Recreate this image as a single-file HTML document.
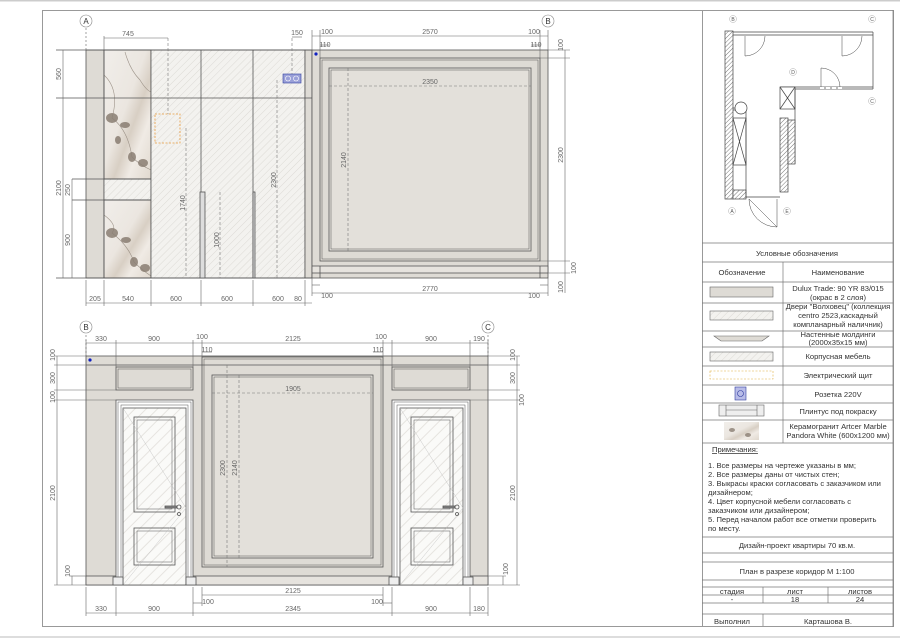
<!DOCTYPE html>
<html><head><meta charset="utf-8"><style>
html,body{margin:0;padding:0;background:#fff;}
svg{display:block;font-family:"Liberation Sans",sans-serif;}
.d{font-size:7px;fill:#666;}
.t{font-size:7.6px;fill:#333;}
</style></head><body>
<svg width="900" height="638" viewBox="0 0 900 638" xmlns="http://www.w3.org/2000/svg">
<defs>
<pattern id="h" width="5" height="5" patternUnits="userSpaceOnUse" patternTransform="rotate(45)">
<rect width="5" height="5" fill="#f3f2ef"/><line x1="0" y1="0" x2="0" y2="5" stroke="#dcdad5" stroke-width="1"/></pattern>
<pattern id="dh" width="8" height="8" patternUnits="userSpaceOnUse" patternTransform="rotate(45)">
<rect width="8" height="8" fill="#fafaf8"/><line x1="0" y1="0" x2="0" y2="8" stroke="#e6e4e0" stroke-width="2"/></pattern>
<pattern id="wh" width="3" height="3" patternUnits="userSpaceOnUse" patternTransform="rotate(45)">
<rect width="3" height="3" fill="#fff"/><line x1="0" y1="0" x2="0" y2="3" stroke="#555" stroke-width="0.8"/></pattern>
<linearGradient id="m" x1="0" y1="0" x2="1" y2="1">
<stop offset="0" stop-color="#f1eeea"/><stop offset="0.45" stop-color="#ebe6e0"/><stop offset="0.6" stop-color="#d8cfc4"/><stop offset="0.75" stop-color="#f0ebe5"/><stop offset="1" stop-color="#e0d8ce"/></linearGradient>
</defs>
<rect x="0" y="0" width="900" height="1.5" fill="#ccc"/>
<rect x="0" y="636" width="900" height="2" fill="#ddd"/>
<rect x="42.5" y="10.5" width="851" height="616" fill="none" stroke="#999"/>
<line x1="702.5" y1="10" x2="702.5" y2="627" stroke="#999"/>

<!-- ===== Elevation A ===== -->
<g stroke="#555" stroke-width="0.8">
<rect x="86" y="50" width="18" height="228" fill="#dedbd5"/>
<rect x="104" y="50" width="47" height="129" fill="url(#m)"/>
<rect x="104" y="179" width="47" height="21" fill="url(#h)"/>
<rect x="104" y="200" width="47" height="78" fill="url(#m)"/>
</g>
<g fill="#7d7064" opacity="0.75">
<ellipse cx="112" cy="118" rx="6" ry="5"/><ellipse cx="125" cy="125" rx="5" ry="3"/><ellipse cx="132" cy="157" rx="4" ry="5"/><ellipse cx="143" cy="163" rx="5" ry="4"/><ellipse cx="118" cy="140" rx="3" ry="4"/>
<ellipse cx="112" cy="233" rx="6" ry="5"/><ellipse cx="126" cy="240" rx="5" ry="3"/><ellipse cx="134" cy="262" rx="4" ry="5"/><ellipse cx="145" cy="268" rx="5" ry="4"/>
</g>
<g stroke="#8a7f74" stroke-width="0.6" fill="none" opacity="0.8">
<path d="M104,75 Q120,90 112,118 Q128,130 132,157 Q140,165 151,170"/>
<path d="M125,52 Q130,70 140,80 Q146,90 151,92"/>
<path d="M104,215 Q118,225 112,233 Q128,245 134,262 Q142,270 151,276"/>
</g>
<g stroke="#555" stroke-width="0.8">
<rect x="104" y="50" width="47" height="129" fill="none"/>
<rect x="104" y="200" width="47" height="78" fill="none"/>
<rect x="151" y="50" width="154" height="228" fill="url(#h)"/>
<rect x="305" y="50" width="7" height="228" fill="#dedbd5"/>
<line x1="56" y1="98" x2="312" y2="98"/>
<line x1="56" y1="50" x2="312" y2="50"/>
<line x1="56" y1="278" x2="312" y2="278"/>
<line x1="201" y1="50" x2="201" y2="278"/>
<line x1="253" y1="50" x2="253" y2="278"/>
<rect x="200" y="192" width="5" height="86" fill="#ddd"/>
<rect x="253" y="192" width="2" height="86" fill="#ddd"/>
<line x1="72" y1="179" x2="151" y2="179"/><line x1="72" y1="200" x2="151" y2="200"/>
</g>
<rect x="155" y="114" width="25" height="29" fill="none" stroke="#e89a3c" stroke-width="0.8" stroke-dasharray="2,1.5"/>
<rect x="283" y="74" width="18" height="9" fill="#9aa0d8" stroke="#3340a0" stroke-width="0.6"/>
<circle cx="288" cy="78.5" r="2.5" fill="none" stroke="#fff" stroke-width="0.6"/><circle cx="296" cy="78.5" r="2.5" fill="none" stroke="#fff" stroke-width="0.6"/>
<g stroke="#777" stroke-width="0.6" stroke-dasharray="3,2" fill="none">
<line x1="168" y1="38" x2="168" y2="114"/><line x1="186" y1="128" x2="186" y2="278"/>
<line x1="220" y1="192" x2="220" y2="278"/><line x1="277" y1="80" x2="277" y2="278"/>
<line x1="292" y1="38" x2="292" y2="74"/>
</g>
<g stroke="#666" stroke-width="0.6" fill="none">
<line x1="63" y1="50" x2="63" y2="278"/><line x1="72" y1="179" x2="72" y2="278"/>
<line x1="104" y1="38" x2="168" y2="38"/><line x1="104" y1="36" x2="104" y2="50"/>
<line x1="86" y1="303" x2="312" y2="303"/>
<line x1="86" y1="280" x2="86" y2="306"/><line x1="104" y1="280" x2="104" y2="306"/><line x1="151" y1="280" x2="151" y2="306"/><line x1="201" y1="280" x2="201" y2="306"/><line x1="253" y1="280" x2="253" y2="306"/><line x1="305" y1="280" x2="305" y2="306"/>
<line x1="292" y1="37" x2="302" y2="37"/>
<line x1="86" y1="28" x2="86" y2="50" stroke-dasharray="2,2"/>
</g>
<circle cx="86" cy="21" r="6" fill="#fff" stroke="#888" stroke-width="0.6"/><text x="86" y="24" text-anchor="middle" font-size="8" fill="#333">A</text>
<g class="d">
<text x="128" y="36" text-anchor="middle">745</text><text x="297" y="35" text-anchor="middle">150</text>
<text x="95" y="301" text-anchor="middle">205</text><text x="128" y="301" text-anchor="middle">540</text><text x="176" y="301" text-anchor="middle">600</text><text x="227" y="301" text-anchor="middle">600</text><text x="278" y="301" text-anchor="middle">600</text><text x="298" y="301" text-anchor="middle">80</text>
<text transform="translate(61,74) rotate(-90)" text-anchor="middle">560</text>
<text transform="translate(61,188) rotate(-90)" text-anchor="middle">2100</text>
<text transform="translate(70,190) rotate(-90)" text-anchor="middle">250</text>
<text transform="translate(70,240) rotate(-90)" text-anchor="middle">900</text>
<text transform="translate(185,203) rotate(-90)" text-anchor="middle">1740</text>
<text transform="translate(219,240) rotate(-90)" text-anchor="middle">1000</text>
<text transform="translate(276,180) rotate(-90)" text-anchor="middle">2300</text>
</g>

<!-- ===== Elevation B ===== -->
<g stroke="#555" stroke-width="0.8">
<rect x="312" y="50" width="236" height="228" fill="#dedbd5"/>
<rect x="320" y="58" width="220" height="203" fill="none"/>
<rect x="322" y="60" width="216" height="199" fill="none" stroke-width="0.5"/>
<rect x="329" y="68" width="202" height="183" fill="#e3e0da"/>
<rect x="331" y="70" width="198" height="179" fill="none" stroke-width="0.5"/>
<rect x="312" y="266" width="236" height="7" fill="#e6e3de"/>
<line x1="320" y1="266" x2="320" y2="278"/><line x1="540" y1="266" x2="540" y2="278"/>
</g>
<circle cx="316" cy="54" r="1.6" fill="#1020c0"/>
<g stroke="#777" stroke-width="0.6" stroke-dasharray="3,2" fill="none">
<line x1="329" y1="86" x2="531" y2="86"/><line x1="348" y1="68" x2="348" y2="251"/>
</g>
<g stroke="#666" stroke-width="0.6" fill="none">
<line x1="312" y1="36" x2="548" y2="36"/><line x1="320" y1="45" x2="329" y2="45"/><line x1="531" y1="45" x2="540" y2="45"/>
<line x1="312" y1="30" x2="312" y2="50"/><line x1="320" y1="30" x2="320" y2="58"/><line x1="540" y1="30" x2="540" y2="58"/><line x1="548" y1="30" x2="548" y2="50"/>
<line x1="565" y1="50" x2="565" y2="293"/><line x1="548" y1="50" x2="570" y2="50"/><line x1="540" y1="58" x2="570" y2="58"/><line x1="540" y1="261" x2="570" y2="261"/><line x1="548" y1="273" x2="570" y2="273"/>
<line x1="312" y1="293" x2="548" y2="293"/><line x1="312" y1="285" x2="320" y2="285"/><line x1="540" y1="285" x2="548" y2="285"/>
<line x1="312" y1="278" x2="312" y2="296"/><line x1="548" y1="278" x2="548" y2="296"/>
</g>
<circle cx="548" cy="21" r="6" fill="#fff" stroke="#888" stroke-width="0.6"/><text x="548" y="24" text-anchor="middle" font-size="8" fill="#333">B</text>
<g class="d">
<text x="327" y="34" text-anchor="middle">100</text><text x="430" y="34" text-anchor="middle">2570</text><text x="534" y="34" text-anchor="middle">100</text>
<text x="325" y="47" text-anchor="middle">110</text><text x="536" y="47" text-anchor="middle">110</text>
<text x="430" y="84" text-anchor="middle">2350</text>
<text x="430" y="291" text-anchor="middle">2770</text><text x="327" y="298" text-anchor="middle">100</text><text x="534" y="298" text-anchor="middle">100</text>
<text transform="translate(346,160) rotate(-90)" text-anchor="middle">2140</text>
<text transform="translate(563,155) rotate(-90)" text-anchor="middle">2300</text>
<text transform="translate(563,45) rotate(-90)" text-anchor="middle">100</text>
<text transform="translate(576,268) rotate(-90)" text-anchor="middle">100</text>
<text transform="translate(563,287) rotate(-90)" text-anchor="middle">100</text>
</g>

<!-- ===== Bottom Elevation ===== -->
<g stroke="#555" stroke-width="0.8">
<rect x="86" y="356" width="402" height="229" fill="#dedbd5"/>
<line x1="86" y1="365" x2="488" y2="365"/>
<rect x="116" y="367" width="77" height="23" fill="#dedbd5"/><rect x="118" y="369" width="73" height="19" fill="none" stroke-width="0.5"/>
<rect x="392" y="367" width="78" height="23" fill="#dedbd5"/><rect x="394" y="369" width="74" height="19" fill="none" stroke-width="0.5"/>
<rect x="202" y="357" width="181" height="210" fill="none"/>
<rect x="204" y="359" width="177" height="206" fill="none" stroke-width="0.5"/>
<rect x="212" y="375" width="161" height="183" fill="#e3e0da"/>
<rect x="214" y="377" width="157" height="179" fill="none" stroke-width="0.5"/>
<rect x="86" y="576" width="402" height="9" fill="#e6e3de"/>
<!-- left door -->
<rect x="116" y="400" width="77" height="185" fill="#fff"/>
<rect x="118" y="402" width="73" height="183" fill="none" stroke-width="0.5"/>
<rect x="121" y="405" width="67" height="180" fill="none" stroke-width="0.5"/>
<rect x="123" y="408" width="63" height="177" fill="url(#dh)"/>
<rect x="134" y="417" width="41" height="95" fill="url(#dh)"/><rect x="137" y="420" width="35" height="89" fill="none" stroke-width="0.5"/>
<rect x="134" y="528" width="41" height="37" fill="url(#dh)"/><rect x="137" y="531" width="35" height="31" fill="none" stroke-width="0.5"/>
<line x1="123" y1="408" x2="186" y2="508" stroke="#bbb" stroke-width="0.4"/><line x1="123" y1="585" x2="186" y2="508" stroke="#bbb" stroke-width="0.4"/>
<rect x="165" y="506" width="12" height="2" fill="#888"/><circle cx="179" cy="507" r="2" fill="none"/><circle cx="179" cy="514" r="1.5" fill="none"/>
<rect x="113" y="577" width="10" height="8" fill="#eee"/><rect x="186" y="577" width="10" height="8" fill="#eee"/>
<!-- right door -->
<rect x="392" y="400" width="78" height="185" fill="#fff"/>
<rect x="394" y="402" width="74" height="183" fill="none" stroke-width="0.5"/>
<rect x="397" y="405" width="68" height="180" fill="none" stroke-width="0.5"/>
<rect x="400" y="408" width="63" height="177" fill="url(#dh)"/>
<rect x="411" y="417" width="42" height="95" fill="url(#dh)"/><rect x="414" y="420" width="36" height="89" fill="none" stroke-width="0.5"/>
<rect x="411" y="528" width="42" height="37" fill="url(#dh)"/><rect x="414" y="531" width="36" height="31" fill="none" stroke-width="0.5"/>
<line x1="400" y1="408" x2="463" y2="508" stroke="#bbb" stroke-width="0.4"/><line x1="400" y1="585" x2="463" y2="508" stroke="#bbb" stroke-width="0.4"/>
<rect x="443" y="506" width="12" height="2" fill="#888"/><circle cx="457" cy="507" r="2" fill="none"/><circle cx="457" cy="514" r="1.5" fill="none"/>
<rect x="389" y="577" width="10" height="8" fill="#eee"/><rect x="463" y="577" width="10" height="8" fill="#eee"/>
</g>
<circle cx="90" cy="360" r="1.6" fill="#1020c0"/>
<g stroke="#777" stroke-width="0.6" stroke-dasharray="3,2" fill="none">
<line x1="212" y1="393" x2="373" y2="393"/><line x1="227" y1="365" x2="227" y2="567"/><line x1="239" y1="375" x2="239" y2="558"/>
</g>
<g stroke="#666" stroke-width="0.6" fill="none">
<line x1="86" y1="343" x2="488" y2="343"/>
<line x1="86" y1="340" x2="86" y2="356"/><line x1="116" y1="340" x2="116" y2="367"/><line x1="193" y1="340" x2="193" y2="367"/><line x1="202" y1="340" x2="202" y2="357"/><line x1="383" y1="340" x2="383" y2="357"/><line x1="392" y1="340" x2="392" y2="367"/><line x1="470" y1="340" x2="470" y2="367"/><line x1="488" y1="340" x2="488" y2="356"/>
<line x1="202" y1="352" x2="212" y2="352"/><line x1="373" y1="352" x2="383" y2="352"/>
<line x1="57" y1="356" x2="57" y2="585"/><line x1="72" y1="576" x2="72" y2="585"/>
<line x1="54" y1="356" x2="86" y2="356"/><line x1="54" y1="365" x2="86" y2="365"/><line x1="54" y1="390" x2="116" y2="390"/><line x1="54" y1="400" x2="116" y2="400"/><line x1="54" y1="585" x2="86" y2="585"/><line x1="70" y1="576" x2="86" y2="576"/>
<line x1="517" y1="356" x2="517" y2="585"/><line x1="503" y1="576" x2="503" y2="585"/>
<line x1="488" y1="356" x2="520" y2="356"/><line x1="488" y1="365" x2="520" y2="365"/><line x1="470" y1="390" x2="520" y2="390"/><line x1="470" y1="400" x2="520" y2="400"/><line x1="488" y1="585" x2="520" y2="585"/><line x1="488" y1="576" x2="506" y2="576"/>
<line x1="202" y1="595" x2="383" y2="595"/><line x1="193" y1="603" x2="202" y2="603"/><line x1="383" y1="603" x2="392" y2="603"/>
<line x1="86" y1="613" x2="488" y2="613"/>
<line x1="86" y1="587" x2="86" y2="616"/><line x1="116" y1="587" x2="116" y2="616"/><line x1="193" y1="587" x2="193" y2="616"/><line x1="202" y1="587" x2="202" y2="606"/><line x1="383" y1="587" x2="383" y2="606"/><line x1="392" y1="587" x2="392" y2="616"/><line x1="470" y1="587" x2="470" y2="616"/><line x1="488" y1="587" x2="488" y2="616"/>
<line x1="86" y1="335" x2="86" y2="356" stroke-dasharray="2,2"/><line x1="488" y1="335" x2="488" y2="356" stroke-dasharray="2,2"/>
</g>
<circle cx="86" cy="327" r="6" fill="#fff" stroke="#888" stroke-width="0.6"/><text x="86" y="330" text-anchor="middle" font-size="8" fill="#333">B</text>
<circle cx="488" cy="327" r="6" fill="#fff" stroke="#888" stroke-width="0.6"/><text x="488" y="330" text-anchor="middle" font-size="8" fill="#333">C</text>
<g class="d">
<text x="101" y="341" text-anchor="middle">330</text><text x="154" y="341" text-anchor="middle">900</text><text x="202" y="339" text-anchor="middle">100</text><text x="293" y="341" text-anchor="middle">2125</text><text x="381" y="339" text-anchor="middle">100</text><text x="431" y="341" text-anchor="middle">900</text><text x="479" y="341" text-anchor="middle">190</text>
<text x="207" y="352" text-anchor="middle">110</text><text x="378" y="352" text-anchor="middle">110</text>
<text x="293" y="391" text-anchor="middle">1905</text>
<text x="293" y="593" text-anchor="middle">2125</text><text x="208" y="604" text-anchor="middle">100</text><text x="377" y="604" text-anchor="middle">100</text>
<text x="101" y="611" text-anchor="middle">330</text><text x="154" y="611" text-anchor="middle">900</text><text x="293" y="611" text-anchor="middle">2345</text><text x="431" y="611" text-anchor="middle">900</text><text x="479" y="611" text-anchor="middle">180</text>
<text transform="translate(55,355) rotate(-90)" text-anchor="middle">100</text>
<text transform="translate(55,378) rotate(-90)" text-anchor="middle">300</text>
<text transform="translate(55,397) rotate(-90)" text-anchor="middle">100</text>
<text transform="translate(55,493) rotate(-90)" text-anchor="middle">2100</text>
<text transform="translate(70,571) rotate(-90)" text-anchor="middle">100</text>
<text transform="translate(515,355) rotate(-90)" text-anchor="middle">100</text>
<text transform="translate(515,378) rotate(-90)" text-anchor="middle">300</text>
<text transform="translate(524,400) rotate(-90)" text-anchor="middle">100</text>
<text transform="translate(515,493) rotate(-90)" text-anchor="middle">2100</text>
<text transform="translate(508,569) rotate(-90)" text-anchor="middle">100</text>
<text transform="translate(225,468) rotate(-90)" text-anchor="middle">2300</text>
<text transform="translate(237,468) rotate(-90)" text-anchor="middle">2140</text>
</g>

<!-- ===== Plan ===== -->
<g stroke="#444" stroke-width="0.7">
<rect x="725" y="31" width="8" height="168" fill="url(#wh)"/>
<line x1="733" y1="32" x2="873" y2="32"/><line x1="733" y1="35" x2="873" y2="35"/>
<line x1="873" y1="32" x2="873" y2="89"/>
<line x1="780" y1="87" x2="873" y2="87"/><line x1="780" y1="89" x2="873" y2="89"/>
<rect x="780" y="87" width="15" height="22" fill="#fff"/><line x1="780" y1="87" x2="795" y2="109"/><line x1="795" y1="87" x2="780" y2="109"/>
<line x1="795" y1="89" x2="795" y2="164"/>
<rect x="780" y="118" width="8" height="74" fill="url(#wh)"/>
<rect x="788" y="120" width="7" height="44" fill="url(#wh)"/>
<rect x="733" y="118" width="13" height="47" fill="#fff"/><line x1="733" y1="118" x2="746" y2="165"/><line x1="746" y1="118" x2="733" y2="165"/>
<line x1="733" y1="108" x2="746" y2="108"/><line x1="733" y1="110" x2="746" y2="110"/>
<rect x="733" y="190" width="13" height="9" fill="url(#wh)"/>
<line x1="746" y1="110" x2="746" y2="198"/>
<line x1="746" y1="197" x2="780" y2="197"/>
<circle cx="741" cy="108" r="6" fill="#fff"/>
<path d="M745,36 L745,56 A20,20 0 0 0 765,36" fill="none" stroke-width="0.5"/>
<path d="M842,36 L842,56 A20,20 0 0 0 862,36" fill="none" stroke-width="0.5"/>
<path d="M821,87 L821,68 A19,19 0 0 1 840,87" fill="none" stroke-width="0.5"/>
<path d="M749,199 L777,227 L777,199" fill="none" stroke-width="0.5"/>
<path d="M749,199 A28,28 0 0 0 777,227" fill="none" stroke-width="0.5"/>
</g>
<g stroke="#fff" stroke-width="2" stroke-dasharray="4,2"><line x1="746" y1="33.5" x2="770" y2="33.5"/><line x1="842" y1="33.5" x2="866" y2="33.5"/><line x1="820" y1="88" x2="843" y2="88"/></g>
<g font-size="5" fill="#555" text-anchor="middle">
<circle cx="733" cy="19" r="3.5" fill="#fff" stroke="#999" stroke-width="0.4"/><text x="733" y="21">B</text>
<circle cx="872" cy="19" r="3.5" fill="#fff" stroke="#999" stroke-width="0.4"/><text x="872" y="21">C</text>
<circle cx="793" cy="72" r="3.5" fill="#fff" stroke="#999" stroke-width="0.4"/><text x="793" y="74">D</text>
<circle cx="872" cy="101" r="3.5" fill="#fff" stroke="#999" stroke-width="0.4"/><text x="872" y="103">C</text>
<circle cx="732" cy="211" r="3.5" fill="#fff" stroke="#999" stroke-width="0.4"/><text x="732" y="213">A</text>
<circle cx="787" cy="211" r="3.5" fill="#fff" stroke="#999" stroke-width="0.4"/><text x="787" y="213">E</text>
</g>

<!-- ===== Title block table ===== -->
<g stroke="#777" stroke-width="0.7" fill="none">
<line x1="702" y1="243" x2="893" y2="243"/><line x1="702" y1="262" x2="893" y2="262"/><line x1="702" y1="282" x2="893" y2="282"/>
<line x1="702" y1="303" x2="893" y2="303"/><line x1="702" y1="331" x2="893" y2="331"/><line x1="702" y1="347" x2="893" y2="347"/>
<line x1="702" y1="366" x2="893" y2="366"/><line x1="702" y1="385" x2="893" y2="385"/><line x1="702" y1="403" x2="893" y2="403"/>
<line x1="702" y1="420" x2="893" y2="420"/><line x1="702" y1="443" x2="893" y2="443"/>
<line x1="702" y1="537" x2="893" y2="537"/><line x1="702" y1="553" x2="893" y2="553"/><line x1="702" y1="562" x2="893" y2="562"/>
<line x1="702" y1="580" x2="893" y2="580"/><line x1="702" y1="587" x2="893" y2="587"/><line x1="702" y1="595" x2="893" y2="595"/><line x1="702" y1="603" x2="893" y2="603"/><line x1="702" y1="614" x2="893" y2="614"/>
<line x1="783" y1="262" x2="783" y2="443"/>
<line x1="763" y1="587" x2="763" y2="603"/><line x1="828" y1="587" x2="828" y2="603"/><line x1="763" y1="614" x2="763" y2="626"/>
<line x1="893" y1="10" x2="893" y2="627"/>
</g>
<g stroke="#666" stroke-width="0.6">
<rect x="710" y="287" width="63" height="10" fill="#dedbd5"/>
<rect x="710" y="311" width="63" height="9" fill="url(#h)"/>
<path d="M714,336 L769,336 L762,341 L721,341 Z" fill="#dedbd5"/>
<rect x="710" y="352" width="63" height="9" fill="url(#h)"/>
<rect x="710" y="371" width="63" height="8" fill="#fff" stroke="#e0b040" stroke-dasharray="2,1.5"/>
<rect x="735" y="387" width="11" height="13" fill="#b8bce8" stroke="#3340a0"/>
<rect x="719" y="405" width="45" height="11" fill="#eee"/><line x1="726" y1="405" x2="726" y2="416"/><line x1="757" y1="405" x2="757" y2="416"/><line x1="726" y1="410" x2="757" y2="410"/>
<rect x="724" y="422" width="35" height="18" fill="url(#m)" stroke="none"/>
</g>
<g fill="#7d7064" opacity="0.7"><ellipse cx="732" cy="430" rx="3" ry="2"/><ellipse cx="748" cy="435" rx="3" ry="2"/></g>
<circle cx="740.5" cy="393.5" r="3" fill="none" stroke="#3340a0" stroke-width="0.6"/>
<g class="t" text-anchor="middle">
<text x="797" y="256">Условные обозначения</text>
<text x="742" y="275">Обозначение</text><text x="838" y="275">Наименование</text>
<text x="838" y="291">Dulux Trade: 90 YR 83/015</text><text x="838" y="300">(окрас в 2 слоя)</text>
<text x="838" y="309">Двери "Волховец" (коллекция</text><text x="838" y="318">centro 2523,каскадный</text><text x="838" y="327">компланарный наличник)</text>
<text x="838" y="337">Настенные молдинги</text><text x="838" y="345">(2000x35x15 мм)</text>
<text x="838" y="359">Корпусная мебель</text>
<text x="838" y="378">Электрический щит</text>
<text x="838" y="397">Розетка 220V</text>
<text x="838" y="414">Плинтус под покраску</text>
<text x="838" y="429">Керамогранит Artcer Marble</text><text x="838" y="438">Pandora White (600x1200 мм)</text>
</g>
<g class="t">
<text x="712" y="452" text-decoration="underline">Примечания:</text>
<text x="708" y="468">1. Все размеры на чертеже указаны в мм;</text>
<text x="708" y="477">2. Все размеры даны от чистых стен;</text>
<text x="708" y="486">3. Выкрасы краски согласовать с заказчиком или</text>
<text x="708" y="495">дизайнером;</text>
<text x="708" y="504">4. Цвет корпусной мебели согласовать с</text>
<text x="708" y="513">заказчиком или дизайнером;</text>
<text x="708" y="522">5. Перед началом работ все отметки проверить</text>
<text x="708" y="531">по месту.</text>
</g>
<g class="t" text-anchor="middle">
<text x="797" y="548">Дизайн-проект квартиры 70 кв.м.</text>
<text x="797" y="574">План в разрезе коридор М 1:100</text>
<text x="732" y="594">стадия</text><text x="795" y="594">лист</text><text x="860" y="594">листов</text>
<text x="732" y="602">-</text><text x="795" y="602">18</text><text x="860" y="602">24</text>
<text x="732" y="624">Выполнил</text><text x="828" y="624">Карташова В.</text>
</g>
</svg>
</body></html>
